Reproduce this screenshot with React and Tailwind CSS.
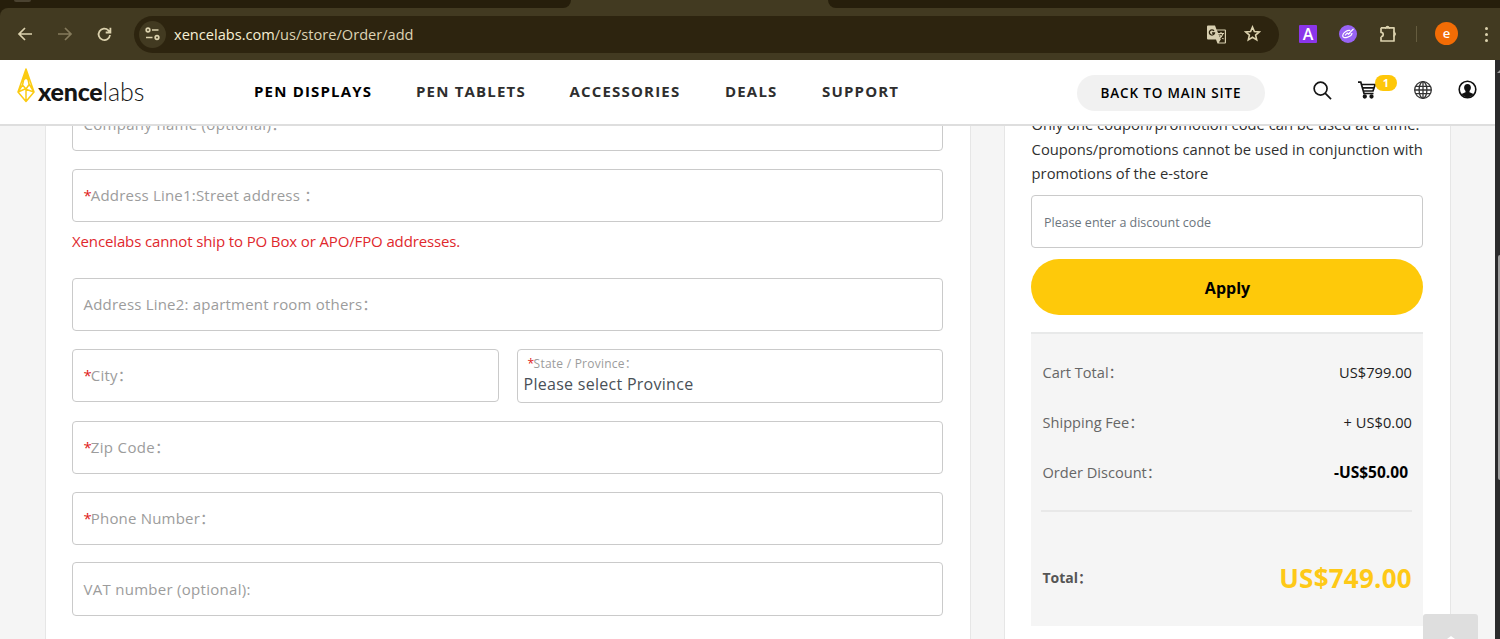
import React from 'react';

function Chrome() {
  return (
    <div className="flex h-[60px] shrink-0 flex-col bg-[#423a21] text-[#dcd2ae]">
      <div className="flex h-2 shrink-0 justify-between bg-[#423a21]">
        <div className="w-[571px] rounded-br-[10px] bg-[#261e0b]">
          <div className="ml-[14px] h-0.5 w-[17px] rounded-b-sm bg-[#4a4230]" />
        </div>
        <div className="w-[672px] rounded-bl-[10px] bg-[#261e0b]" />
      </div>
      <div className="bg-[#261e0b]">
        <div className="flex h-[52px] items-center rounded-tl-[8px] bg-[#423a21]">
          <svg className="ml-[17px]" width="16" height="16" viewBox="0 0 16 16" fill="none" stroke="currentColor" strokeWidth="1.7">
            <path d="M15 8H2.5M8 2L2 8l6 6" />
          </svg>
          <svg className="ml-[24px] text-[#857b5c]" width="16" height="16" viewBox="0 0 16 16" fill="none" stroke="currentColor" strokeWidth="1.7">
            <path d="M1 8h12.500M8 2l6 6-6 6" />
          </svg>
          <svg className="ml-[23px]" width="17" height="17" viewBox="0 0 17 17" fill="none" stroke="currentColor" strokeWidth="1.8">
            <path d="M14 9a5.700 5.700 0 1 1-1.600-4.600L14.200 6M14.400 1.800v4.700H9.700" />
          </svg>
          <div className="ml-[21px] flex h-[37px] w-[1145px] items-center rounded-full bg-[#2d240f] pl-[5px]">
            <div className="flex size-[27px] items-center justify-center rounded-full bg-[#423a21]">
              <svg width="15" height="14" viewBox="0 0 15 14" fill="none" stroke="currentColor" strokeWidth="1.700">
                <circle cx="3" cy="3" r="1.800" /><path d="M7 3h6.500M1 10.500h6.500" /><circle cx="12" cy="10.500" r="1.800" />
              </svg>
            </div>
            <span className="mb-px ml-2 text-[14.6px] leading-5 text-[#ddd3b4]"><span className="text-[#f7efd4]">xencelabs.com</span>/us/store/Order/add</span>
            <svg className="ml-auto" width="19" height="19" viewBox="0 0 19 19">
              <path d="M1 0.500h7l1.500 4h8.500a1 1 0 0 1 1 1V17.500a1 1 0 0 1-1 1h-7.500L9 14.500H1a1 1 0 0 1-1-1V1.500a1 1 0 0 1 1-1z" fill="#d8cfb0" />
              <path d="M10 5.500h7.800v12h-6l2-3z" fill="#2d240f" />
              <path d="M11 8.500h6M14 7v1.500M16 8.500c-.5 2-2.500 4-4 5M12.500 9.500c.8 2 2.300 3.400 4 4.500" stroke="#d8cfb0" strokeWidth="1.100" fill="none" />
              <path d="M7 5.800A2.600 2.600 0 1 0 7.500 8H5" stroke="#2d240f" strokeWidth="1.300" fill="none" />
            </svg>
            <svg className="mr-[18px] mb-px ml-[18px]" width="17" height="17" viewBox="0 0 17 17" fill="none" stroke="currentColor" strokeWidth="1.600">
              <path d="M8.500 2l1.900 4.500 4.900.4-3.700 3.200 1.100 4.800-4.200-2.600-4.200 2.600 1.100-4.800L1.700 6.900l4.900-.4z" />
            </svg>
          </div>
          <div className="ml-5 flex size-[18px] items-center justify-center rounded-[1px] bg-[#8b35ea] text-[16px] leading-[18px] font-semibold text-white">A</div>
          <svg className="ml-[22px]" width="18" height="18" viewBox="0 0 18 18" fill="none">
            <circle cx="9" cy="9" r="9" fill="#9863f4" />
            <path d="M14.500 3.800L9 9.500M11.300 5.500C8 5 4 7.500 3.700 10.500c-.2 2 2 2.600 4.300 1.900 2.700-.8 5-2.700 5-4.400M6 10.300l2.200-2.300 1.200 1.200 2-1.500" stroke="#fff" strokeWidth="1.200" />
          </svg>
          <svg className="mb-0.5 ml-[22px]" width="19" height="19" viewBox="0 0 19 19" fill="none" stroke="currentColor" strokeWidth="1.700">
            <path d="M2 3.800h5M10 3.800h5v4.500M15 11.500v5.500H2v-4.300M2 3.800v4.500a2.200 2.200 0 0 1 0 4.400" strokeLinejoin="round" />
            <path d="M6.500 3.800a2 2 0 0 1 4 0zM15 7.900a2 2 0 0 1 0 4z" fill="currentColor" stroke="none" />
            <path d="M6 3.800h5M15 7.500v5" />
          </svg>
          <div className="ml-[18px] h-4 w-px bg-[#655c3f]" />
          <div className="mb-px ml-[18px] flex size-[23px] items-center justify-center rounded-full bg-[#f26c05] pb-0.5 text-[13px] leading-4 font-semibold text-white">e</div>
          <div className="ml-[26px] flex w-[5px] flex-col items-center gap-[3px]">
            <div className="size-[3px] rounded-full bg-[#dcd2ae]" />
            <div className="size-[3px] rounded-full bg-[#dcd2ae]" />
            <div className="size-[3px] rounded-full bg-[#dcd2ae]" />
          </div>
        </div>
      </div>
    </div>
  );
}

function Header() {
  return (
    <header className="flex h-[66px] shrink-0 border-b-2 border-[#dedede] bg-white">
      <div className="flex h-[42px] w-[238px] items-start pt-2 pl-4">
        <svg width="20" height="35" viewBox="0 0 20 35" fill="none" stroke="#fbcb12" strokeWidth="1.500" strokeLinejoin="round">
          <path d="M10 1L2 24l8 9.500L18 24zM10 1L6.500 17 2 24l7-3 9 3-5-8zM6.500 17L10 21l3.500-5M10 21v12.500" />
          <path d="M10 1L7 13l3-2 3 2z" fill="#fbcb12" stroke="none" />
        </svg>
        <div className="ml-[2px] pt-[8px] font-[Lato] text-[25px] leading-[30px] text-[#151515]">
          <span className="font-black tracking-[-0.200px]">xence</span><span className="font-light tracking-[-0.100px]">labs</span>
        </div>
      </div>
      <nav className="flex h-[61px] items-center pl-4 text-[15px] leading-5 font-bold tracking-[1.180px] text-[#2e2e2e]">
        <span className="w-[162px] text-black">PEN DISPLAYS</span>
        <span className="w-[153.500px]">PEN TABLETS</span>
        <span className="w-[155.500px]">ACCESSORIES</span>
        <span className="w-[97px]">DEALS</span>
        <span className="w-[100px]">SUPPORT</span>
      </nav>
      <div className="mt-[15px] ml-[155px] flex h-9 w-[188px] items-center justify-center rounded-full bg-[#f1f1f1] text-[13.5px] leading-5 font-semibold tracking-[0.840px] text-black">BACK TO MAIN SITE</div>
      <svg className="mt-[21px] ml-12" width="19" height="19" viewBox="0 0 20 20" fill="none" stroke="#151515" strokeWidth="1.800">
        <circle cx="8" cy="8" r="6.800" /><path d="M12.700 12.700L19 19" />
      </svg>
      <div className="mt-[15px] ml-[26px] flex w-[39px]">
        <svg className="mt-[6px] shrink-0" width="18" height="18" viewBox="0 0 18 18" fill="none" stroke="#151515" strokeWidth="1.700">
          <path d="M0 1.200h2.800l3.200 11.300h9.500M3.500 3.500h13.700l-2.200 6.500H5.500M4.500 6.800h11.500" /><circle cx="6.800" cy="15.500" r="1.300" fill="#151515" /><circle cx="13.500" cy="15.500" r="1.300" fill="#151515" />
        </svg>
        <div className="-ml-px flex h-4 w-[22px] shrink-0 items-center justify-center rounded-full bg-[#fec709] text-[11px] leading-4 font-bold text-white">1</div>
      </div>
      <svg className="mt-[21px] ml-[17px]" width="18" height="18" viewBox="0 0 18 18" fill="none" stroke="#333" strokeWidth="1.300">
        <circle cx="9" cy="9" r="8.300" /><ellipse cx="9" cy="9" rx="3.900" ry="8.300" /><path d="M9 .7v16.600M.7 9h16.600M1.800 5.300h14.400M1.800 12.700h14.400" />
      </svg>
      <svg className="mt-[20px] ml-[26px]" width="19" height="19" viewBox="0 0 19 19">
        <circle cx="9.500" cy="9.500" r="8.300" fill="none" stroke="#111" strokeWidth="1.600" />
        <path d="M9.500 4c2.200 0 3.400 1.500 3.400 3.600 0 1.500-.6 2.700-1.400 3.400v1.200l4 1.700c-1.300 2-3.500 3.300-6 3.300s-4.700-1.300-6-3.300l4-1.700V11c-.8-.7-1.400-1.900-1.400-3.400C6.100 5.500 7.300 4 9.500 4z" fill="#111" />
      </svg>
    </header>
  );
}

function Field({ label, required, className = '' }) {
  return (
    <div className={`flex items-center rounded-[4px] border border-[#cacaca] bg-white pb-px pl-[10.500px] text-[15px] leading-5 tracking-[0.200px] text-[#9c9c9c] ${className}`}>
      <span className="whitespace-pre">{required && <span className="tracking-[-1px] text-[#e02020]">*</span>}{label}</span>
    </div>
  );
}

function AddressForm() {
  return (
    <section className="ml-[45px] flex w-[926px] flex-col border-x border-[#e6e6e6] bg-white pr-[27px] pl-[26px]">
      <Field label="Company name (optional)：" className="-mt-[28px] h-[53px] shrink-0 tracking-[0.300px]" />
      <Field label="Address Line1:Street address ：" required className="mt-[18px] h-[53px] shrink-0 tracking-[0.120px]" />
      <p className="mt-[9px] h-[21px] text-[15px] leading-5 tracking-[-0.130px] text-[#e0282d]">Xencelabs cannot ship to PO Box or APO/FPO addresses.</p>
      <Field label="Address Line2: apartment room others：" className="mt-[26px] h-[53px] shrink-0" />
      <div className="mt-[18px] flex justify-between">
        <Field label="City：" required className="h-[53px] w-[427px]" />
        <div className="h-[54px] w-[426px] rounded-[4px] border border-[#cacaca] pt-[6px] pl-[5.500px]">
          <div className="pl-1 text-[12px] leading-4 tracking-[0.230px] text-[#9c9c9c]"><span className="tracking-[-0.500px] text-[#e02020]">*</span>State / Province：</div>
          <div className="text-[16px] leading-[25px] tracking-[0.280px] text-[#495057]">Please select Province</div>
        </div>
      </div>
      <Field label="Zip Code：" required className="mt-[18px] h-[53px] shrink-0 tracking-[0.350px]" />
      <Field label="Phone Number：" required className="mt-[17.500px] h-[53.500px] shrink-0" />
      <Field label="VAT number (optional):" className="mt-[17px] h-[54px] shrink-0 pb-[2px] tracking-[0.280px]" />
    </section>
  );
}

function Row({ label, value, bold }) {
  return (
    <div className="flex h-[50px] items-center justify-between text-[14.6px] leading-5">
      <span className="text-[#666]">{label}</span>
      {bold ? <b className="mr-1 text-[15.5px] text-black">{value}</b> : <span className="tracking-[0.050px] text-[#1d1d1d]">{value}</span>}
    </div>
  );
}

function Summary() {
  return (
    <section className="ml-[33px] flex w-[447px] flex-col border-x border-[#e6e6e6] bg-white px-[26px]">
      <p className="-mt-[14px] h-[75px] pl-[0.600px] text-[14.75px] leading-[24.600px] whitespace-nowrap text-[#303030]">
        Only one coupon/promotion code can be used at a time.<br />
        Coupons/promotions cannot be used in conjunction with<br />
        promotions of the e-store
      </p>
      <div className="mt-2 flex h-[53px] w-[392px] shrink-0 items-center rounded-[4px] border border-[#cacaca] pt-[2px] pl-3 text-[12.5px] leading-5 text-[#6c757d]">Please enter a discount code</div>
      <button className="mt-[11px] h-14 w-[392px] shrink-0 rounded-full bg-[#fec90a] pt-px pl-px text-[16px] leading-5 font-bold text-black">Apply</button>
      <div className="mt-[17px] flex h-[294px] w-[392px] shrink-0 flex-col border-t-2 border-[#e8e9e9] bg-[#f5f5f5] pr-[11px] pl-[10px]">
        <div className="mt-[13px] h-[165px] border-b-2 border-[#e8e8e8] pl-[1.500px]">
          <Row label="Cart Total：" value="US$799.00" />
          <Row label="Shipping Fee：" value="+ US$0.00" />
          <Row label="Order Discount：" value="-US$50.00" bold />
        </div>
        <div className="mt-[44px] flex h-11 items-center justify-between pl-[1.500px] font-bold">
          <span className="pb-px text-[14px] leading-5 text-[#555]">Total：</span>
          <span className="text-[26px] leading-8 tracking-[0.250px] text-[#fec917]">US$749.00</span>
        </div>
      </div>
    </section>
  );
}

export default function App() {
  return (
    <div className="flex h-[639px] w-[1500px] flex-col overflow-hidden bg-[#f5f5f5] font-['Open_Sans','Noto_Sans_CJK_SC',sans-serif]">
      <Chrome />
      <div className="flex min-h-0 flex-1">
        <div className="relative flex w-[1495px] flex-col overflow-hidden">
          <Header />
          <main className="flex min-h-0 flex-1 overflow-hidden">
            <AddressForm />
            <Summary />
          </main>
          <button className="absolute right-[17px] bottom-0 flex h-[25px] w-[55px] items-end justify-center rounded-t-[3px] bg-[#dedede]">
            <svg width="12" height="3" viewBox="0 0 12 3"><path d="M2 3l4-3 4 3z" fill="#fff" /></svg>
          </button>
        </div>
        <div className="flex w-[5px] flex-col items-end bg-[#2b2b2c]">
          <svg className="mt-[10px]" width="3" height="3" viewBox="0 0 3 3"><path d="M0 3l3-3v3z" fill="#9f9f9f" /></svg>
          <div className="mt-[182px] h-[225px] w-0.5 rounded-l-full bg-[#9f9f9f]" />
        </div>
      </div>
    </div>
  );
}
